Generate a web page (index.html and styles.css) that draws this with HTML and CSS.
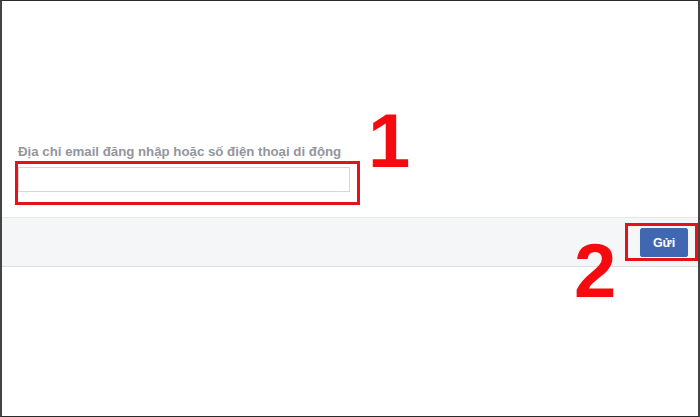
FILE: index.html
```html
<!DOCTYPE html>
<html lang="vi">
<head>
<meta charset="utf-8">
<title>Tìm tài khoản</title>
<link rel="stylesheet" href="styles.css">
</head>
<body>
<div class="frame">
  <div class="form">
    <label class="label" for="email">Địa chỉ email đăng nhập hoặc số điện thoại di động</label>
    <div class="mark mark-field">
      <input class="input" id="email" type="text">
    </div>
  </div>
  <div class="band">
    <div class="mark mark-button">
      <button class="button" type="button">Gửi</button>
    </div>
  </div>
  <span class="step step-1">1</span>
  <span class="step step-2">2</span>
</div>
</body>
</html>
```

FILE: styles.css
```css
html, body {
  margin: 0;
  padding: 0;
  background: #ffffff;
}

.frame {
  position: relative;
  width: 700px;
  height: 417px;
  box-sizing: border-box;
  border-top: 1px solid #2a2a2a;
  border-bottom: 1px solid #2a2a2a;
  border-left: 2px solid #444444;
  border-right: 2px solid #444444;
  background: #ffffff;
  font-family: "Liberation Sans", Arial, Helvetica, sans-serif;
  overflow: hidden;
}

.form {
  padding: 143px 0 0 16px;
}

.label {
  display: block;
  font-size: 13.25px;
  line-height: 16px;
  font-weight: bold;
  color: #93969c;
  margin: 0 0 1px 0;
}

.mark {
  border: 3px solid #e5121b;
  box-sizing: border-box;
}

.mark-field {
  margin-left: -3px;
  width: 345px;
  height: 44px;
  padding: 3px 7px 10px 0;
}

.input {
  display: block;
  width: 332px;
  height: 25px;
  box-sizing: border-box;
  margin: 0;
  border: 1px solid #d3d6db;
  background: #ffffff;
  padding: 0 6px;
  font-family: inherit;
  font-size: 12px;
}

.band {
  margin-top: 12px;
  height: 50px;
  box-sizing: border-box;
  border-top: 1px solid #e6e7ea;
  border-bottom: 1px solid #dcdee2;
  background: #f5f6f7;
  display: flex;
  justify-content: flex-end;
  align-items: center;
}

.mark-button {
  width: 73px;
  height: 38px;
  padding: 2px 7px 1px 12px;
  display: flex;
  align-items: center;
}

.button {
  width: 48px;
  height: 29px;
  border: 1px solid #4267b2;
  border-radius: 2px;
  background: #4267b2;
  color: #ffffff;
  font-family: inherit;
  font-size: 12.5px;
  font-weight: bold;
  padding: 0;
  margin: 0;
}

.step {
  position: absolute;
  font-family: "Liberation Sans", Arial, sans-serif;
  font-weight: bold;
  font-size: 76px;
  line-height: 1;
  color: #f50a10;
}

.step-1 {
  left: 366px;
  top: 102px;
}

.step-2 {
  left: 572px;
  top: 232px;
}
```
